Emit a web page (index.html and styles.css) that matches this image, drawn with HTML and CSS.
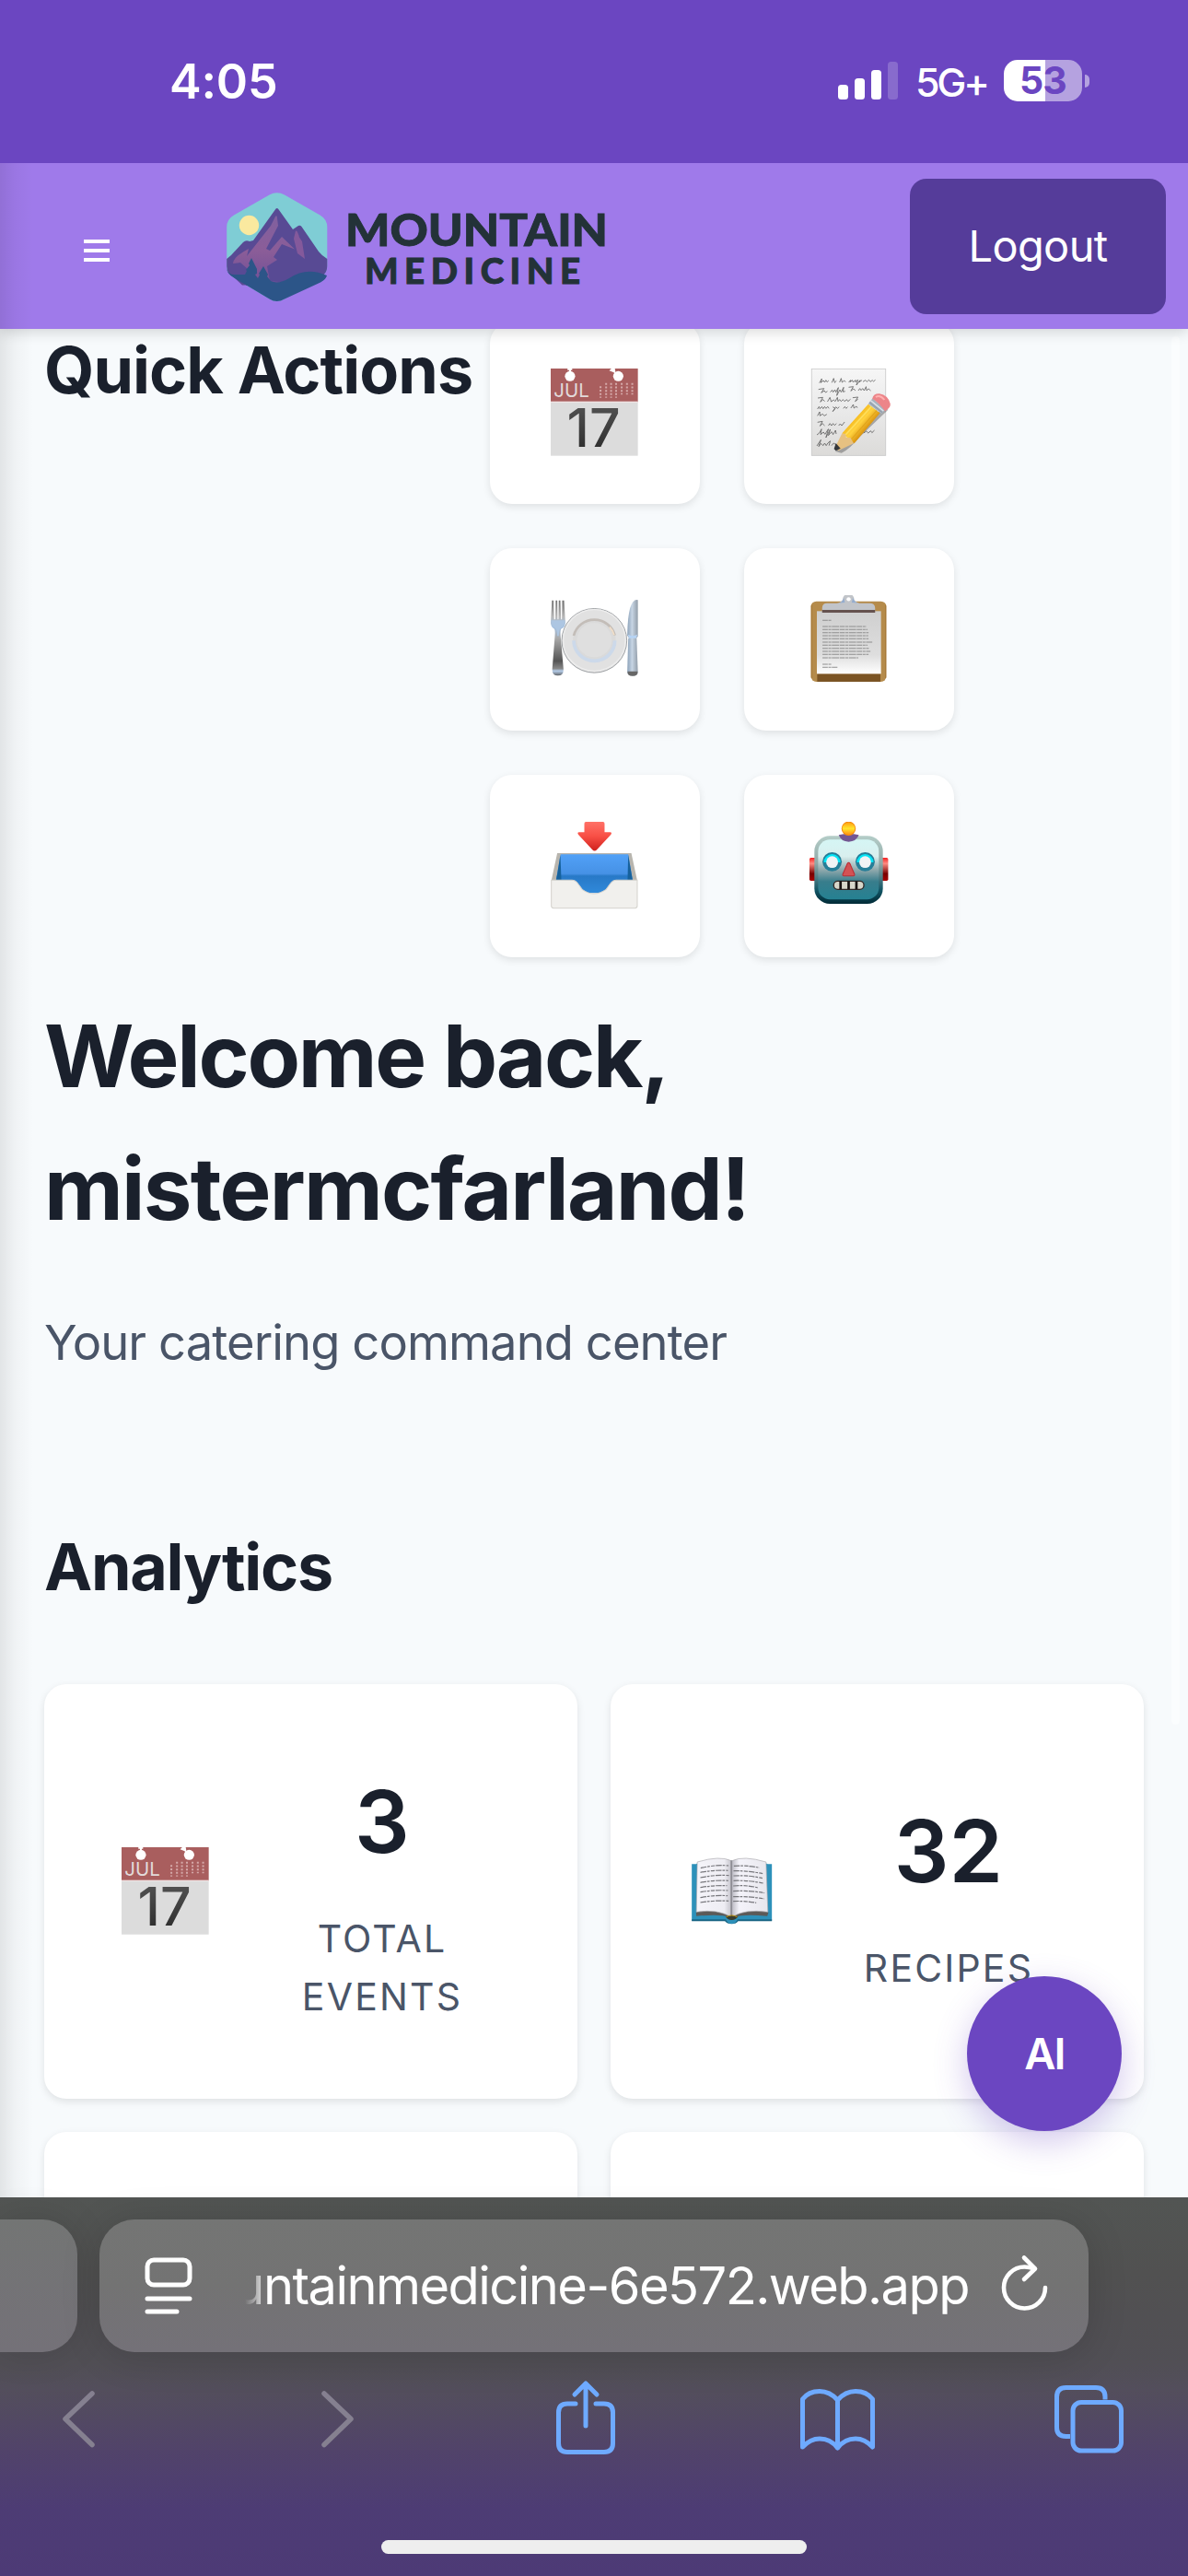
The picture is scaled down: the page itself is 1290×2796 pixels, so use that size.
FILE: index.html
```html
<!DOCTYPE html>
<html lang="en">
<head>
<meta charset="utf-8">
<title>Mountain Medicine</title>
<link rel="stylesheet" href="styles.css">
</head>
<body>
<svg class="defs" aria-hidden="true">
  <defs>
    <linearGradient id="ink" x1="0" y1="0" x2="0" y2="1"><stop offset="0" stop-color="#5a5a5a"/><stop offset="1" stop-color="#262626"/></linearGradient>
    <symbol id="calendar" viewBox="231 150 284 288" preserveAspectRatio="none">
      <rect x="231" y="260" width="280" height="174" fill="#dcdcdc"/>
      <rect x="231" y="149" width="280" height="110" fill="#a95e5e"/>
      <rect x="231" y="257" width="280" height="4" fill="#f0e4e4"/>
      <circle cx="293" cy="175" r="16.500" fill="#fff"/><path d="M285 149h15v6h-4v8h-6v-8h-5z" fill="#fff"/>
      <circle cx="448" cy="175" r="16.500" fill="#fff"/><path d="M427 149h10l3 18-8-5-13-5z" fill="#fff"/>
      <text x="241" y="243" font-size="62" textLength="114" lengthAdjust="spacingAndGlyphs" fill="#e2dada">JUL</text>
      <g stroke="#d5a9a9" stroke-width="6" stroke-dasharray="6 5.200" fill="none"><path d="M409 197v48M425 197v48M441 197v48M459 197v38M476 197v38M493 197v38M391 208v37"/></g>
      <text x="283" y="405" font-size="172" font-weight="500" textLength="172" lengthAdjust="spacingAndGlyphs" fill="url(#ink)">17</text>
    </symbol>
  </defs>
</svg>

<div class="status">
  <span class="clock">4:05</span>
  <div class="status-right">
    <svg class="signal" viewBox="0 0 65 42"><g fill="#fff"><rect y="25" width="11" height="16" rx="3.500"/><rect x="18" y="18" width="11" height="23" rx="3.500"/><rect x="36" y="9" width="11" height="32" rx="3.500"/><rect x="54" width="11" height="41" rx="3.500" opacity=".2"/></g></svg>
    <span class="network">5G+</span>
    <span class="battery">53</span>
    <span class="nub"></span>
  </div>
</div>

<header class="topbar">
  <span class="menu"><i></i><i></i><i></i></span>
  <svg class="logo" viewBox="0 0 440 145">
    <defs><linearGradient id="rock" x1="0" y1="0" x2="0" y2="1"><stop offset="0" stop-color="#80609f"/><stop offset=".5" stop-color="#8b5d98"/><stop offset="1" stop-color="#6f4f97"/></linearGradient></defs>
    <path d="M62.500 16.500q8.300-4.500 16.500 0L117.500 38.500q7.800 4.500 7.800 13V94q0 8-7.800 12.500L79 129.500q-8.300 5-16.500 0L24 106.500q-7.800-4.500-7.800-12.500V51.500q0-8.500 7.800-13z" fill="#7fcdd5"/>
    <circle cx="40.500" cy="49.500" r="10.700" fill="#fae99f"/>
    <path d="M16.200 86L21 82 34 68q3-3 7-1l4-1L68.500 33q2.300-4 4.500 0L88 54l6-4q2-1 3.500 1L116 78q3 4 9.300 8v8q0 8-7.800 12.500l-14 8H33l-9-8.500q-7.800-4-7.800-12z" fill="#584a94"/>
    <path d="M69 40Q71 38 71 42L72 50 59 75l4 2 13-15 14 13.500-14-5.500-9 14 4 3-11 7 3 16 20 2v3H37L39 97l-8-7-8 1q0-7 17-16l-2 8L64 50z" fill="url(#rock)"/>
    <path d="M91 55.500q2-1 4 7L98 67l3 19-8-6-4-16z" fill="#84599b"/>
    <path d="M16.200 97q2 6 7.800 6h12l2-4-1-1 4-5-1-2 3-6 6 12v5l-2 1 3 4 2-4-1-1 5-8 5 9-1 2 4 5q8 4 20-3 19-13 41-3-1 4-7 7.500L79 129.500q-8.300 5-16.500 0L24 106.500q-7-4-7.800-9.500z" fill="#2c5588"/>
    <g class="wordmark"><text x="145" y="72" font-size="48" textLength="285" lengthAdjust="spacingAndGlyphs">MOUNTAIN</text><text x="166" y="113.300" font-size="38.500" textLength="234">MEDICINE</text></g>
  </svg>
  <span class="logout">Logout</span>
</header>

<main class="page">
  <section class="quick">
    <h2>Quick Actions</h2>
    <div class="actions">
      <div class="action"><svg class="emoji"><use href="#calendar"/></svg></div>
      <div class="action"><svg class="emoji" viewBox="1047.500 150 284 288" preserveAspectRatio="none">
        <defs><linearGradient id="paper" x1="0" y1="0" x2="0" y2="1"><stop offset="0" stop-color="#f6f6f6"/><stop offset=".5" stop-color="#e9e9e9"/><stop offset="1" stop-color="#dcdbd9"/></linearGradient>
        <linearGradient id="pencil" gradientUnits="userSpaceOnUse" x1="1205" y1="310" x2="1245" y2="345"><stop offset="0" stop-color="#f5b91c"/><stop offset=".5" stop-color="#ffd23e"/><stop offset="1" stop-color="#dd9812"/></linearGradient></defs>
        <rect x="1069" y="151" width="238" height="282" fill="url(#paper)" stroke="#c9c9c9" stroke-width="2.500"/>
        <g fill="none" stroke="#3d3d3d" stroke-width="2.600" stroke-linejoin="round" opacity=".75">
          <path d="M1094 197l8-14-3 13 8-7 4 6 4-7 4 6 5-5m10 7l6-14 3 14 6-6m10 5l5-13 3 13 7-6 4 5m10 0l7-6-3 6 8-6 2 6 9-6-1 6 8-7-5 17 12-16-3 6 9-6m3 5l8-5 5 5 6-6 5 6 6-5 4 4 6-5"/>
          <path d="M1091 218l18-3-9 14 10-7 4 6 6-4m9 3l6-7 3 7 6-8 3 8 8-15-5 26 10-19 4 8 8-16-2 15 7-2m11-13l15-2-8 14 9-7 6 6m9 0l5-7 4 6 5-6 5 7 6-13 2 13 6-6 7 6"/>
          <path d="M1089 246l16-2-8 15 9-8 5 6m9 1l8-14 4 14 8-6 5 5 7-13 2 13 5-6 5 6 6-6 5 6 7-6 4 6 8-7m7-5l17-2-9 14 9-7"/>
          <path d="M1088 282l5-8 3 7 6-7 4 7 5-7 4 6 6-6 4 6m12-5l8 5-8 10 10-15 5 5 6-5m13 5l5-6 4 6 5-5m10 4l8-12 2 12 8-6 3 5M1088 304l7-13 1 13 8-6 6 6 8-5"/>
          <path d="M1088 325l16-3-8 15 8-8 7 7m12 0l5-7 5 7 5-7 5 6 6-6m7 7l5-6 5 6 9-12M1086 366l8-6 7-13-3 18 9-8 5 7 11-17-8 28 14-27-6 20 10-12 5 9 8-14 2 12M1086 402l13-20-7 22 7-10 7 7 5-8 5 8 5-8 8-7-4 15m8 0l7-8 9 6M1236 360l9-6 6 6 8-7 4 6 8-8"/>
        </g>
        <path d="M1145 420l20 5q25-11 60-54l90-87-12-10z" fill="#111" opacity=".3"/>
        <path d="M1167 361L1251 266l38 29-83 99z" fill="url(#pencil)"/>
        <path d="M1178 366l84-93" stroke="#ffdf5c" stroke-width="5"/><path d="M1196 381l82-94" stroke="#e0a31a" stroke-width="3"/>
        <path d="M1167 361l11 2 2 12 14 0 10 19-48 23-12-9z" fill="#e7c181"/>
        <path d="M1147 393l15 17-15 8-6-6z" fill="#34373b"/>
        <path d="M1265 247l42 35-13 16-43-33z" fill="#a8b3be"/><path d="M1259 254l41 34" stroke="#dde5eb" stroke-width="4"/><path d="M1255 260l41 33" stroke="#7c8996" stroke-width="2"/>
        <path d="M1264 248q4-17 23-16 28 5 35 33 1 12-11 19l-6 5q-20-29-41-41z" fill="#ec8589"/><path d="M1275 243q14-9 28 9" stroke="#ffb0b0" stroke-width="6" fill="none"/>
      </svg></div>
      <div class="action"><svg class="emoji" viewBox="231 168 284 288" preserveAspectRatio="none">
        <defs><linearGradient id="steel" gradientUnits="userSpaceOnUse" x1="0" y1="184" x2="0" y2="432"><stop offset="0" stop-color="#6f6f6f"/><stop offset=".22" stop-color="#b7b7b7"/><stop offset=".35" stop-color="#a5c2e3"/><stop offset=".5" stop-color="#aaa"/><stop offset=".8" stop-color="#555"/><stop offset=".9" stop-color="#888"/><stop offset=".93" stop-color="#b5cdea"/><stop offset="1" stop-color="#555"/></linearGradient>
        <linearGradient id="blade"><stop offset="0" stop-color="#8ba1b8"/><stop offset=".45" stop-color="#c7d5e4"/><stop offset="1" stop-color="#929da9"/></linearGradient></defs>
        <circle cx="371" cy="316" r="104.500" fill="#e1e1e1" stroke="#8f9296" stroke-width="2.500"/>
        <circle cx="371" cy="315" r="100" fill="none" stroke="#ededed" stroke-width="4"/>
        <circle cx="371" cy="316" r="69" fill="#dadada"/>
        <path d="M305 300a68 68 0 0 1 132-1" stroke="#c3bdb8" stroke-width="8" fill="none"/><path d="M305 316a66 66 0 0 0 132 0" stroke="#ccd9ea" stroke-width="11" fill="none"/>
        <circle cx="371" cy="314" r="56" fill="#dfdfdf"/><path d="M420 272q12 12 15 26" stroke="#f2dfc9" stroke-width="5" fill="none"/>
        <path d="M235 185h5l2 62h4l1-62h5l1 62h3l1-62h5l2 62h3l1-62h6l4 74q0 14-14 19-3 6-1 27l9 103q1 22-18 22t-18-22l8-103q2-21-1-27-11-5-12-19z" fill="url(#steel)"/>
        <path d="M232 250h45q1 18-14 25-6 4-6 26h-5q0-20-6-26-13-5-14-25z" fill="#adc6e2"/>
        <path d="M511 184q-15-5-25 26-8 28-9 89l6 10h23l5-7z" fill="url(#blade)"/>
        <path d="M480 308h27l4 110q0 13-16 13t-18-13z" fill="url(#blade)"/><path d="M478 416h32q2 15-16 15t-16-15z" fill="#666"/><path d="M479 296q15 8 30 0l-3 12h-23z" fill="#b6d3f4"/>
      </svg></div>
      <div class="action"><svg class="emoji" viewBox="1047.500 168 284 288" preserveAspectRatio="none">
        <defs><linearGradient id="sheet" x1="0" y1="0" x2="0" y2="1"><stop offset="0" stop-color="#cfcfcf"/><stop offset=".7" stop-color="#dedede"/><stop offset="1" stop-color="#fff"/></linearGradient></defs>
        <rect x="1067" y="188" width="242" height="262" rx="17" fill="#b58b4b"/>
        <path d="M1087 424h203v26h-203z" fill="#7b5424"/><path d="M1069 200v238M1307 200v238" stroke="#a37636" stroke-width="3"/>
        <rect x="1086" y="220" width="206" height="204" fill="url(#sheet)"/>
        <path d="M1103 225v-15q0-16 16-16h32q13-2 18-12a18 18 0 0 1 37 0q5 10 18 12h31q18 0 18 16v15z" fill="#c1c4c9"/><path d="M1146 194q24 0 26-18l4 16zM1228 194q-24 0-26-18l-4 16z" fill="#94acce"/><rect x="1103" y="216" width="170" height="9" fill="#65524f"/><circle cx="1188" cy="181" r="6.500" fill="#fff"/>
        <g stroke="#8e8e8e" stroke-width="3" stroke-dasharray="17 2 9 2 23 2"><path d="M1104 250h30M1104 270h141M1104 280h145M1104 290h148M1104 300h147M1104 310h148M1104 321h160M1104 331h145M1104 341h149M1104 351h154M1104 361h148M1104 372h115M1104 393h30M1104 403h48"/></g>
      </svg></div>
      <div class="action"><svg class="emoji" viewBox="231 156 284 288" preserveAspectRatio="none">
        <defs><linearGradient id="red" x1="0" y1="0" x2="0" y2="1"><stop offset="0" stop-color="#ff7167"/><stop offset=".5" stop-color="#f84f45"/><stop offset="1" stop-color="#cf211d"/></linearGradient><linearGradient id="blue" x1="0" y1="0" x2="0" y2="1"><stop offset="0" stop-color="#51a1f7"/><stop offset=".5" stop-color="#4691e5"/><stop offset=".56" stop-color="#2879c7"/><stop offset="1" stop-color="#3089da"/></linearGradient></defs>
        <path d="M344 156h55q5 0 5 6v28h18q7 1 2 8l-44 48q-8 9-16 0l-44-48q-5-7 2-8h17v-28q0-6 5-6z" fill="url(#red)"/>
        <path d="M252 258h238l19 90H233z" fill="#b8b5ae"/><path d="M263 262h217l14 84-40 42H290l-42-42z" fill="url(#blue)"/><path d="M262 263l-13 82h16zM480 263l14 82h-16z" fill="#16619c"/>
        <path d="M233 346h66q12 0 20 12l13 18q37 28 77 0l13-18q8-12 20-12h67v84q0 7-7 7H240q-7 0-7-7z" fill="#f1f0ed" stroke="#d4d2cd" stroke-width="3"/>
      </svg></div>
      <div class="action"><svg class="emoji" viewBox="1047.500 156 284 288" preserveAspectRatio="none">
        <defs><linearGradient id="head" x1="0" y1="0" x2="0" y2="1"><stop offset="0" stop-color="#d5f6f5"/><stop offset=".28" stop-color="#d9efee"/><stop offset=".5" stop-color="#92aaad"/><stop offset=".7" stop-color="#387d8c"/><stop offset="1" stop-color="#258192"/></linearGradient><linearGradient id="shell" x1="0" y1="0" x2="0" y2="1"><stop offset="0" stop-color="#b4cdc8"/><stop offset=".4" stop-color="#91a9a7"/><stop offset=".8" stop-color="#125565"/><stop offset="1" stop-color="#002b37"/></linearGradient><linearGradient id="ear" x1="0" y1="0" x2="0" y2="1"><stop offset="0" stop-color="#f42020"/><stop offset=".25" stop-color="#ff8b82"/><stop offset=".7" stop-color="#780000"/><stop offset="1" stop-color="#a90000"/></linearGradient><linearGradient id="bulb" x1="0" y1="0" x2="0" y2="1"><stop offset="0" stop-color="#ff9c11"/><stop offset=".5" stop-color="#ffe52d"/><stop offset="1" stop-color="#ff8b10"/></linearGradient></defs>
        <rect x="1062" y="273" width="24" height="75" rx="5" fill="url(#ear)"/><rect x="1291" y="273" width="24" height="75" rx="5" fill="url(#ear)"/>
        <rect x="1078" y="202" width="220" height="221" rx="50" fill="url(#shell)"/><rect x="1090" y="214" width="195" height="195" rx="38" fill="url(#head)"/>
        <path d="M1156 199q32-8 65 0-9 22-33 22t-32-22z" fill="#725692"/><circle cx="1188" cy="178" r="21.500" fill="url(#bulb)" stroke="#f48a0c" stroke-width="3"/>
        <circle cx="1135" cy="286" r="31" fill="#267e98"/><path d="M1108 288a27 27 0 0 1 54 0" fill="#04e5f5"/><circle cx="1135" cy="287" r="19" fill="#f0f3f5"/>
        <circle cx="1241" cy="286" r="31" fill="#267e98"/><path d="M1214 288a27 27 0 0 1 54 0" fill="#04e5f5"/><circle cx="1241" cy="287" r="19" fill="#f0f3f5"/>
        <path d="M1184 292q4-6 8 0l15 35q1 5-4 5h-30q-5 0-4-5z" fill="#d35254" stroke="#b92c34" stroke-width="3"/>
        <rect x="1140" y="349" width="97" height="27" rx="13" fill="#d7d6ca" stroke="#332827" stroke-width="4"/><path d="M1162 349v27M1188 349v27M1213 349v27" stroke="#171111" stroke-width="8"/>
      </svg></div>
    </div>
  </section>

  <h1><span class="greeting">Welcome back,</span><br>mistermcfarland!</h1>
  <p class="subtitle">Your catering command center</p>

  <h2 class="analytics">Analytics</h2>
  <div class="stats">
    <div class="stat">
      <svg class="emoji"><use href="#calendar"/></svg>
      <div class="stat-body"><div class="value">3</div><div class="label">TOTAL<br>EVENTS</div></div>
    </div>
    <div class="stat">
      <svg class="emoji" viewBox="49.500 12 288 288">
        <defs><linearGradient id="leaf"><stop offset="0" stop-color="#f5f4fa"/><stop offset=".8" stop-color="#eeedf3"/><stop offset="1" stop-color="#c4c3cb"/></linearGradient><linearGradient id="leaf2"><stop offset="0" stop-color="#bdbcc5"/><stop offset=".2" stop-color="#f4f3fa"/><stop offset="1" stop-color="#e8e7ed"/></linearGradient></defs>
        <path d="M62 67h14l2-2h229l2 2h14v184H211q-5 10-19 10t-19-10H62z" fill="#2d91ba"/><path d="M62 247h111q5 14 19 14t19-14h112v6H213q-6 9-21 9t-22-9H62z" fill="#1a6685"/>
        <path d="M76 224l10-7h212l14 7-4 12q-80-6-103 3h-25q-24-10-103-3z" fill="#5c5a58"/>
        <path d="M80 60q74-22 111-4v184q-43-28-114-17z" fill="url(#leaf)" stroke="#aaa9ae" stroke-width="2"/><path d="M193 56q37-18 111 4l6 163q-78-11-117 17z" fill="url(#leaf2)" stroke="#aaa9ae" stroke-width="2"/>
        <path d="M191 55v184" stroke="#8d8c94" stroke-width="5"/><path d="M172 238q20-9 41 0-7 11-21 11t-20-11z" fill="#3a3d30"/><path d="M174 239q18-10 36 0" stroke="#c89c13" stroke-width="3" fill="none"/>
        <g fill="none" stroke="#77777c" stroke-width="3.600" stroke-dasharray="19 3 8 4 13 3"><path d="M91 80q48-12 91-8M90 94q48-9 90-6M90 111q48-10 93-7M90 127q48-9 91-6M90 143q48-8 87-6M90 158q48-8 90-5M90 176q48-9 89-6M90 192q48-8 92-5M199 73q44-3 84 6M198 89q46-1 95 9M198 105q46-3 94 8M198 121q45-2 97 8M197 138q42-4 82 6M197 155q53-3 102 6M197 173q52-2 101 7M197 188q38-2 75 5"/></g>
      </svg>
      <div class="stat-body"><div class="value">32</div><div class="label">RECIPES</div></div>
    </div>
    <div class="stat"></div>
    <div class="stat"></div>
  </div>
  <div class="fab">AI</div>
  <div class="scrollbar"></div>
</main>
<div class="edge-shade"></div>

<footer class="browser">
  <div class="tabs-row">
    <div class="prev-tab"></div>
    <div class="address">
      <svg class="reader" viewBox="0 0 52 62" fill="none" stroke="#fff" stroke-width="5" stroke-linecap="round"><rect x="3" y="3" width="46" height="27" rx="7"/><path d="M3 45h46M3 59h32"/></svg>
      <div class="url">untainmedicine-6e572.web.app</div>
      <svg class="reload" viewBox="0 0 52 64" fill="none" stroke="#fff" stroke-width="4.600" stroke-linecap="round" stroke-linejoin="round"><path d="M48 37A22.500 22.500 0 1 1 25.500 14.500Q30 14.500 36 16.300"/><path d="M25 4.500L37 16.500 25 28"/></svg>
    </div>
  </div>
  <div class="toolbar">
    <svg class="ico" viewBox="0 0 84 84"><path d="M52 18L23 45.500 52 73.500" class="dim"/></svg>
    <svg class="ico" viewBox="0 0 84 84"><path d="M31 18L60 45.500 31 73.500" class="dim"/></svg>
    <svg class="ico" viewBox="0 0 84 84"><path d="M31 29H22q-9.500 0-9.500 9.500V72q0 9.500 9.500 9.500H62q9.500 0 9.500-9.500V38.500Q71.500 29 62 29H53M42 53V7M30 19L42 7 54 19"/></svg>
    <svg class="ico" viewBox="0 0 84 84"><path d="M42.500 25Q34 15.500 23 15.500 11 15.500 4.500 24V76Q13 67 23 67 35 67 42.500 77 50 67 62 67 72 67 80.500 76V24Q74 15.500 62 15.500 51 15.500 42.500 25V77"/></svg>
    <svg class="ico" viewBox="0 0 84 84"><path d="M22 64.500H17.500q-10 0-10-9.500V21.500q0-10 10-10H50q10 0 10 10v3" stroke-linecap="butt"/><rect x="25" y="27.500" width="52.500" height="52.500" rx="9"/></svg>
  </div>
  <div class="home"></div>
</footer>
</body>
</html>
```
FILE: styles.css
```css
* { box-sizing: border-box; }
html, body { margin: 0; }
body {
  width: 1290px;
  height: 2796px;
  overflow: hidden;
  position: relative;
  display: flex;
  flex-direction: column;
  background: #f7fafc;
  color: #1a202c;
  font-family: Inter, "Liberation Sans", sans-serif;
}
h1, h2, p { margin: 0; }
.defs { position: absolute; width: 0; height: 0; }
svg { display: block; flex: none; }

/* status bar */
.status {
  flex: none;
  height: 177px;
  position: relative;
  z-index: 3;
  background: #6b46c1;
  color: #fff;
  display: flex;
  justify-content: space-between;
  padding: 60px 107px 0 184px;
}
.clock { font-size: 52px; font-weight: 600; line-height: 57px; letter-spacing: -.004em; }
.status-right { display: flex; height: 55px; align-items: center; }
.signal { width: 65px; height: 42px; margin-right: 19px; }
.network { width: 77px; font-size: 43px; font-weight: 500; line-height: 55px; letter-spacing: -.075em; margin-right: 19px; white-space: nowrap; padding-top: 4px; }
.battery {
  width: 85px;
  height: 45px;
  border-radius: 15px;
  background: linear-gradient(90deg, #fff 45px, #b5a2e0 45px);
  color: #6b46c1;
  font-size: 41px;
  font-weight: 700;
  line-height: 45px;
  letter-spacing: -.02em;
  text-align: center;
}
.nub { width: 5px; height: 14px; margin-left: 3px; border-radius: 0 7px 7px 0; background: #b5a2e0; }

/* site header */
.topbar {
  flex: none;
  height: 180px;
  position: relative;
  z-index: 2;
  background: #9f7aea;
  box-shadow: 0 3px 14px rgba(0, 0, 0, .16);
  display: flex;
  align-items: flex-start;
  padding: 17px 24px 0 91px;
}
.menu { width: 28px; margin: 66px 111px 0 0; display: grid; gap: 6px; }
.menu i { height: 4px; background: #fff; }
.logo { width: 440px; height: 145px; margin-top: 1px; }
.wordmark { font-family: Lato, "Open Sans", sans-serif; font-weight: 900; fill: #233238; stroke: #233238; stroke-width: .9; }
.logout {
  width: 278px;
  height: 147px;
  margin-left: auto;
  border-radius: 18px;
  background: #553c9a;
  color: #fff;
  font-size: 47px;
  line-height: 145px;
  letter-spacing: -.014em;
  text-align: center;
}

/* dashboard */
.page { flex: none; height: 2028px; overflow: hidden; position: relative; padding: 0 48px; }
.quick { display: flex; margin-top: -8px; }
h2 { font-size: 70px; font-weight: 700; line-height: 108px; letter-spacing: -.0135em; white-space: nowrap; }
.quick h2 { width: 484px; line-height: 106px; }
.actions { display: grid; grid-template-columns: 228px 228px; gap: 48px; }
.action, .stat {
  background: #fff;
  border-radius: 24px;
  box-shadow: 0 3px 9px rgba(0, 0, 0, .1);
  display: flex;
  align-items: center;
}
.action { height: 198px; justify-content: center; }
.emoji { width: 96px; height: 96px; }
h1 { margin-top: 35px; font-size: 94px; font-weight: 700; line-height: 144px; letter-spacing: -.0185em; white-space: nowrap; }
.greeting { letter-spacing: -.0245em; }
.subtitle { margin-top: 55px; font-size: 52.500px; line-height: 81px; letter-spacing: -.0175em; color: #4a5568; white-space: nowrap; }
.analytics { margin-top: 149px; letter-spacing: -.0185em; }
.stats { margin-top: 73px; display: grid; grid-template-columns: 579px 579px; gap: 36px; }
.stat { height: 450px; padding: 0 84px; }
.stat-body { flex: 1; margin-left: 59px; text-align: center; }
.value { font-size: 94px; font-weight: 600; line-height: 144px; margin-bottom: 24px; margin-top: -2px; }
.label { font-size: 41px; line-height: 63px; letter-spacing: .053em; color: #4a5568; }
.fab {
  position: absolute;
  left: 1050px;
  top: 1788px;
  width: 168px;
  height: 168px;
  border-radius: 50%;
  background: #6b46c1;
  box-shadow: 0 12px 36px rgba(107, 70, 193, .3);
  color: #fff;
  font-size: 47px;
  font-weight: 600;
  line-height: 168px;
  letter-spacing: -.04em;
  text-align: center;
}
.scrollbar { position: absolute; right: 9px; top: 8px; width: 9px; height: 1507px; border-radius: 5px; background: rgba(255, 255, 255, .5); }
.edge-shade {
  position: absolute;
  z-index: 3;
  left: 0;
  top: 177px;
  width: 36px;
  height: 2208px;
  background: linear-gradient(90deg, rgba(0, 0, 0, .085), rgba(0, 0, 0, .03) 45%, transparent);
}

/* browser chrome */
.browser {
  flex: none;
  height: 411px;
  position: relative;
  z-index: 4;
  padding-top: 24px;
  background: linear-gradient(#525553, #515151 20%, #514f55 44%, #534e5c 51%, #51436a 67%, #4d3c74 82%, #4d3a76);
}
.tabs-row { display: flex; gap: 24px; }
.prev-tab { width: 84px; height: 144px; border-radius: 0 38px 38px 0; background: linear-gradient(#737574, #747178); box-shadow: 0 0 40px rgba(0, 0, 0, .12); }
.address {
  width: 1074px;
  height: 144px;
  border-radius: 38px;
  background: linear-gradient(#747574, #737373 50%, #747178);
  box-shadow: 0 4px 44px rgba(0, 0, 0, .14);
  display: flex;
  align-items: center;
  padding: 0 43px 0 49px;
}
.reader { width: 52px; height: 62px; }
.url {
  width: 787px;
  margin: 0 35px 0 57px;
  overflow: hidden;
  display: flex;
  justify-content: flex-end;
  color: #fff;
  font-size: 56px;
  line-height: 80px;
  letter-spacing: -.0275em;
  white-space: nowrap;
  -webkit-mask-image: linear-gradient(90deg, transparent, rgba(0, 0, 0, .6) 16px, #000 24px);
  mask-image: linear-gradient(90deg, transparent, rgba(0, 0, 0, .6) 16px, #000 24px);
}
.reload { width: 52px; height: 64px; margin-top: -6px; }
.toolbar { display: grid; grid-template-columns: repeat(5, 84px); column-gap: 189px; padding: 27px 0 0 48px; }
.ico { width: 84px; height: 84px; fill: none; stroke: #6eaaff; stroke-width: 5; stroke-linecap: round; stroke-linejoin: round; }
.dim { stroke: #858090; stroke-width: 5.500; }
.home { width: 462px; height: 15px; margin: 93px auto 0; border-radius: 8px; background: #eee; }
```
